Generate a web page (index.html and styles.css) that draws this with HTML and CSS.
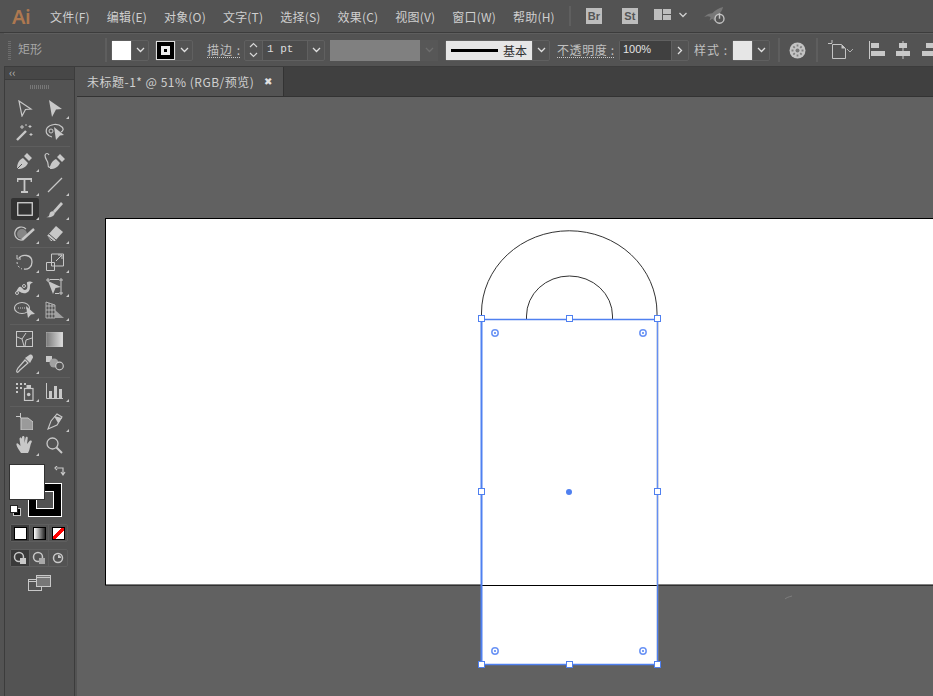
FILE: index.html
```html
<!DOCTYPE html>
<html lang="zh-CN">
<head>
    <meta charset="UTF-8">
    <title>Adobe Illustrator</title>
    <link rel="stylesheet" href="styles.css">
</head>
<body>
<div class="app">
    <!-- menu bar -->
    <header class="menubar">
        <div class="logo">Ai</div>
        <nav class="menu">
            <span>文件(F)</span><span>编辑(E)</span><span>对象(O)</span><span>文字(T)</span><span>选择(S)</span><span>效果(C)</span><span>视图(V)</span><span>窗口(W)</span><span>帮助(H)</span>
        </nav>
        <div class="menu-sep"></div>
        <div class="app-badge badge-br">Br</div>
        <div class="app-badge badge-st">St</div>
        <svg class="layout-icon" width="34" height="11" viewBox="0 0 34 11">
            <path d="M0 0h8v11H0zM9 0h8v5H9zM9 6h8v5H9z" fill="#bdbdbd"/>
            <path d="M25.500 4l3.500 3.500L32.500 4" fill="none" stroke="#d0d0d0" stroke-width="1.300"/>
        </svg>
        <svg class="rocket-icon" width="22" height="18" viewBox="0 0 24 20">
            <path d="M0 11c3-3 6-4 9-4 3-3 7-6 12-7-1 4-3 7-6 9-2 1-3 4-3 7l-3-3-3 2 1-4c-2-1-4-1-7 0z" fill="#777"/>
            <circle cx="17" cy="13" r="5" fill="#535353" stroke="#c4c4c4" stroke-width="1.500"/>
            <path d="M17 7v6" stroke="#c4c4c4" stroke-width="1.600"/>
        </svg>
    </header>

    <!-- control bar -->
    <div class="controlbar">
        <div class="grip"></div>
        <div class="shape-name">矩形</div>
        <div class="bar-sep"></div>
        <div class="combo combo-fill">
            <div class="swatch swatch-white"></div>
            <div class="drop"><svg class="chev" width="9" height="6" viewBox="0 0 9 6"><path d="M1 1l3.500 3.500L8 1"/></svg></div>
        </div>
        <div class="combo combo-stroke">
            <div class="swatch swatch-black"><span class="stroke-mark"></span></div>
            <div class="drop"><svg class="chev" width="9" height="6" viewBox="0 0 9 6"><path d="M1 1l3.500 3.500L8 1"/></svg></div>
        </div>
        <div class="label label-stroke">描边 :</div>
        <div class="combo combo-weight">
            <div class="stepper">
                <svg width="9" height="18" viewBox="0 0 9 18"><path d="M1 6l3.500-3.500L8 6M1 12l3.500 3.500L8 12" fill="none" stroke="#d8d8d8" stroke-width="1.200"/></svg>
            </div>
            <div class="weight-val">1 pt</div>
            <div class="drop"><svg class="chev" width="9" height="6" viewBox="0 0 9 6"><path d="M1 1l3.500 3.500L8 1"/></svg></div>
        </div>
        <div class="profile">
            <div class="profile-fill"></div>
            <div class="profile-drop"><svg class="chev chev-dim" width="9" height="6" viewBox="0 0 9 6"><path d="M1 1l3.500 3.500L8 1"/></svg></div>
        </div>
        <div class="combo combo-style">
            <div class="brush"><span class="brush-line"></span><span class="brush-name">基本</span></div>
            <div class="drop"><svg class="chev" width="9" height="6" viewBox="0 0 9 6"><path d="M1 1l3.500 3.500L8 1"/></svg></div>
        </div>
        <div class="label label-opacity">不透明度 :</div>
        <div class="combo combo-opacity">
            <div class="opacity-val">100%</div>
            <div class="drop drop-side"><svg width="6" height="9" viewBox="0 0 6 9"><path d="M1 1l3.500 3.500L1 8" fill="none" stroke="#e0e0e0" stroke-width="1.300"/></svg></div>
        </div>
        <div class="label label-style">样式 :</div>
        <div class="combo combo-swatch">
            <div class="swatch swatch-light"></div>
            <div class="drop"><svg class="chev" width="9" height="6" viewBox="0 0 9 6"><path d="M1 1l3.500 3.500L8 1"/></svg></div>
        </div>
        <div class="bar-sep sep-b"></div>
        <svg class="recolor" width="17" height="17" viewBox="0 0 17 17">
            <circle cx="8.500" cy="8.500" r="8" fill="#c4c4c4"/>
            <circle cx="8.500" cy="8.500" r="2" fill="#777"/>
            <path d="M8.500 2.500v2M8.500 12.500v2M2.500 8.500h2M12.500 8.500h2M4.300 4.300l1.500 1.500M11.200 11.200l1.500 1.500M12.700 4.300l-1.500 1.500M5.800 11.200l-1.500 1.500" stroke="#808080" stroke-width="1.800"/>
        </svg>
        <div class="bar-sep sep-c"></div>
        <svg class="artboard-tool" width="25" height="20" viewBox="0 0 25 20">
            <path d="M0 3.500h4M4 0v3" stroke="#c4c4c4" fill="none"/>
            <path d="M4.500 4.500h9l4 4v10h-13z" fill="none" stroke="#c4c4c4"/>
            <path d="M13.500 4.500v4h4z" fill="#c4c4c4"/>
            <path d="M19 9l3 3 3-3" fill="none" stroke="#b0b0b0"/>
        </svg>
        <svg class="align-icon align-one" width="16" height="18" viewBox="0 0 16 18"><path d="M.5 0v18" stroke="#c8c8c8"/><path d="M2 2h8v5H2zM2 10h14v5H2z" fill="#c8c8c8"/></svg>
        <svg class="align-icon align-two" width="14" height="18" viewBox="0 0 14 18"><path d="M7 0v18" stroke="#c8c8c8"/><path d="M3 2h8v5H3zM0 10h14v5H0z" fill="#c8c8c8"/></svg>
        <svg class="align-icon align-three" width="14" height="18" viewBox="0 0 14 18"><path d="M4 2h8v5H4zM0 10h14v5H0z" fill="#c8c8c8"/></svg>
    </div>

    <div class="workspace">
        <!-- tools panel -->
        <aside class="tools">
            <div class="tools-head"><span class="collapse">‹‹</span></div>
            <div class="tools-grip"></div>

            <div class="tool-group group-select">
                <div class="tool"><svg width="16" height="17" viewBox="0 0 16 17"><path d="M2 1l12 8-5.500.5L5 16z" fill="none" stroke="#c8c8c8" stroke-width="1.200"/></svg></div>
                <div class="tool corner"><svg width="16" height="17" viewBox="0 0 16 17"><path d="M2 0l13 9-6 .5L5 17z" fill="#c8c8c8"/></svg></div>
                <div class="tool"><svg width="18" height="18" viewBox="0 0 18 18"><path d="M1 17L10 8" stroke="#c8c8c8" stroke-width="2.400"/><path d="M6 2v4M4 4h4M14 2v3M12.500 3.500h3M15 10v3M13.500 11.500h3M10 1v2" stroke="#c8c8c8"/></svg></div>
                <div class="tool"><svg width="20" height="18" viewBox="0 0 20 18"><path d="M7 14C2 13 0 9 2 5c3-4 11-5 15-1 2 2 1 4-1 5" fill="none" stroke="#c8c8c8" stroke-width="1.200"/><path d="M9 4l10 8-4 .5L11 17z" fill="#c8c8c8"/><circle cx="6" cy="8" r="2" fill="none" stroke="#c8c8c8"/></svg></div>
            </div>
            <div class="tool-group group-draw">
                <div class="tool corner"><svg width="17" height="18" viewBox="0 0 17 18"><path d="M1 17c0-6 2-9 6-11l5 5c-2 4-5 6-11 6zM8 4l3-3 5 5-3 3z" fill="#c8c8c8"/><path d="M1 17l5-5" stroke="#535353"/></svg></div>
                <div class="tool"><svg width="22" height="18" viewBox="0 0 22 18"><path d="M6 17c0-5 2-8 6-10l4 4c-2 4-5 6-10 6zM13 5l3-3 5 5-3 3z" fill="#c8c8c8"/><path d="M1 3c0 5 3 5 3 9s2 4 3 2" fill="none" stroke="#c8c8c8" stroke-width="1.200"/><path d="M1 3c1-2 3-2 4 0" fill="none" stroke="#c8c8c8" stroke-width="1.200"/></svg></div>
                <div class="tool corner tool-type"><svg width="15" height="15" viewBox="0 0 15 15"><path d="M.5 4V1h14v3M7.500 1v13M4 14h7" fill="none" stroke="#c8c8c8" stroke-width="1.800"/></svg></div>
                <div class="tool corner"><svg width="16" height="16" viewBox="0 0 16 16"><path d="M1 15L15 1" stroke="#c8c8c8" stroke-width="1.200"/></svg></div>
                <div class="tool corner tool-active"><svg width="16" height="14" viewBox="0 0 16 14"><rect x=".75" y=".75" width="14.500" height="12.500" fill="none" stroke="#d4d4d4" stroke-width="1.300"/></svg></div>
                <div class="tool corner"><svg width="17" height="17" viewBox="0 0 17 17"><path d="M7 10L15 1l2 2-8 9z" fill="#c8c8c8"/><path d="M0 16c3 0 3-1 3.500-3s2-3 4-2.500 1.500 3-.5 4.500-4.500 1.500-7 1z" fill="#c8c8c8"/></svg></div>
                <div class="tool corner"><svg width="22" height="17" viewBox="0 0 22 17"><path d="M8 15A6.500 6.500 0 1 1 12 4" fill="none" stroke="#c8c8c8" stroke-width="1.200"/><circle cx="8" cy="9" r="5" fill="#a8a8a8" opacity=".6"/><path d="M8 15L20 4" stroke="#c8c8c8" stroke-width="2.400"/></svg></div>
                <div class="tool corner"><svg width="18" height="17" viewBox="0 0 18 17"><path d="M1 11L10 1l7 6-8 9H5z" fill="#c8c8c8"/><path d="M1 11l7 5.500M3 9l7 6" fill="none" stroke="#535353"/></svg></div>
            </div>
            <div class="tool-group group-shape">
                <div class="tool corner"><svg width="18" height="17" viewBox="0 0 18 17"><path d="M3 4C6 0 16 0 16 8c0 5-4 8-8 7" fill="none" stroke="#c8c8c8" stroke-width="1.300"/><path d="M1 8c0 3 2 6 5 7" fill="none" stroke="#c8c8c8" stroke-dasharray="2 2"/><path d="M1 1v4h4" fill="none" stroke="#c8c8c8"/></svg></div>
                <div class="tool corner"><svg width="18" height="18" viewBox="0 0 18 18"><path d="M.5 9.500h8v8h-8zM5.500 1h12v12h-12z" fill="none" stroke="#c8c8c8"/><path d="M10 8l6-6M12 2h4v4" fill="none" stroke="#c8c8c8"/></svg></div>
                <div class="tool corner"><svg width="20" height="17" viewBox="0 0 20 17"><path d="M1 14c2-4 3-6 5-5s2 3 4 3 3-3 2-6 4-3 6-1c-3 0-3 2-3 4 0 5-4 7-7 6-3 0-4-3-7-1z" fill="#c8c8c8"/><circle cx="2" cy="15" r="1.500" fill="#535353" stroke="#c8c8c8"/><circle cx="9" cy="8" r="1.500" fill="#535353" stroke="#c8c8c8"/></svg></div>
                <div class="tool corner"><svg width="19" height="17" viewBox="0 0 19 17"><path d="M3 3l13 6-5.500 1-2.500 6z" fill="#c8c8c8"/><path d="M2 1h2v2H2zM15 1h2v2h-2zM15 14h2v2h-2zM5 1.500h9M16 4v9M10 15.500h4" fill="none" stroke="#c8c8c8"/></svg></div>
                <div class="tool corner"><svg width="22" height="18" viewBox="0 0 22 18"><ellipse cx="8" cy="7" rx="7.500" ry="5.500" fill="none" stroke="#c8c8c8" stroke-width="1.100"/><path d="M4 7h9" stroke="#c8c8c8" stroke-dasharray="1 1"/><path d="M12 5l9 8-4 .5L14 17z" fill="#c8c8c8"/></svg></div>
                <div class="tool corner"><svg width="19" height="18" viewBox="0 0 19 18"><path d="M1 1l9 3 0 13H1zM1 5h9M1 9h9M1 13h9M4 2v15M7 3v14" fill="none" stroke="#c8c8c8" stroke-width=".8"/><path d="M10 9l9 8h-9z" fill="#a0a0a0"/></svg></div>
            </div>
            <div class="tool-group group-paint">
                <div class="tool"><svg width="17" height="16" viewBox="0 0 17 16"><rect x=".5" y=".5" width="16" height="15" fill="none" stroke="#c8c8c8"/><path d="M1 6l5 2 4-6M6 8l2 7M10 9l6-2M10 9l-1 6" fill="none" stroke="#c8c8c8"/></svg></div>
                <div class="tool"><svg width="17" height="15" viewBox="0 0 17 15"><defs><linearGradient id="gradBox"><stop offset="0" stop-color="#777"/><stop offset="1" stop-color="#e0e0e0"/></linearGradient></defs><rect width="17" height="15" fill="url(#gradBox)" stroke="#c8c8c8" stroke-width=".6"/></svg></div>
                <div class="tool corner"><svg width="18" height="19" viewBox="0 0 18 19"><path d="M1 18c-1-1 0-2 1-4l7-8 3 3-8 7c-1 1-2 3-3 2z" fill="none" stroke="#c8c8c8" stroke-width="1.200"/><path d="M9 4l5-3.500c2-.5 3 1 3 3L14 9z" fill="#c8c8c8"/></svg></div>
                <div class="tool"><svg width="19" height="16" viewBox="0 0 19 16"><path d="M1 1h6v6H1z" fill="#c8c8c8"/><circle cx="9" cy="8" r="4.500" fill="#a0a0a0"/><circle cx="14.500" cy="11" r="3.800" fill="#535353" stroke="#c8c8c8" stroke-width="1.200"/></svg></div>
            </div>
            <div class="tool-group group-symbol">
                <div class="tool corner"><svg width="19" height="19" viewBox="0 0 19 19"><path d="M1 1h2v2H1zM5 1h2v2H5zM9 1h2v2H9zM1 5h2v2H1zM5 5h2v2H5zM1 9h2v2H1z" fill="#c8c8c8"/><rect x="9.500" y="6.500" width="8.500" height="12" fill="none" stroke="#c8c8c8" stroke-width="1.200"/><rect x="11.500" y="3" width="4.500" height="3" fill="#c8c8c8"/><circle cx="13.700" cy="12.500" r="1.800" fill="#c8c8c8"/></svg></div>
                <div class="tool corner"><svg width="17" height="16" viewBox="0 0 17 16"><path d="M.5 0v15.500H17" fill="none" stroke="#c8c8c8"/><path d="M3 8h3v7H3zM8 3h3v12H8zM13 6h3v9h-3z" fill="#c8c8c8"/></svg></div>
            </div>
            <div class="tool-group group-view">
                <div class="tool"><svg width="17" height="17" viewBox="0 0 17 17"><path d="M0 3.500h5M4.500 0v5" stroke="#c8c8c8" fill="none"/><path d="M5 5h7l5 4v8H5z" fill="#9a9a9a" stroke="#c8c8c8"/></svg></div>
                <div class="tool corner"><svg width="16" height="17" viewBox="0 0 16 17"><path d="M1 16l3-8 6-7 5 3-5 8z" fill="none" stroke="#c8c8c8" stroke-width="1.100"/><path d="M7 3l8 2-4 5z" fill="#c8c8c8"/></svg></div>
                <div class="tool corner"><svg width="17" height="18" viewBox="0 0 17 18"><path d="M5 17C3 14 1 11 .5 9c-.5-2 1-2 2-1l2 2-1-7c0-2 2-2 2.500 0L6 7V1.500c0-2 2.500-2 2.500 0V7l1-5c.5-2 2.500-1.500 2.200.5L11 8l2.500-3c1.500-1 3 0 2 1.500C14 9 14 14 12 17z" fill="#c8c8c8"/></svg></div>
                <div class="tool"><svg width="17" height="17" viewBox="0 0 17 17"><circle cx="6.500" cy="6.500" r="5.500" fill="none" stroke="#c8c8c8" stroke-width="1.300"/><path d="M10.500 10.500L16 16" stroke="#c8c8c8" stroke-width="2"/></svg></div>
            </div>

            <div class="colors">
                <div class="color-stroke"><span></span></div>
                <div class="color-fill"></div>
                <svg class="color-swap" width="12" height="12" viewBox="0 0 12 12"><path d="M3 2h6v6M3 0L1 2l2 2M7 6l2 3 2-3" fill="none" stroke="#c8c8c8" stroke-width="1.200"/></svg>
                <svg class="color-default" width="11" height="11" viewBox="0 0 11 11"><rect x="3.500" y="3.500" width="7" height="7" fill="#000" stroke="#c8c8c8"/><rect x=".5" y=".5" width="7" height="7" fill="#fff" stroke="#222"/></svg>
            </div>
            <div class="mode-row">
                <div class="mode-cell cell-active"><span class="mode mode-white"></span></div>
                <div class="mode-cell"><span class="mode mode-grad"></span></div>
                <div class="mode-cell"><span class="mode mode-none"></span></div>
            </div>
            <div class="mode-row draw-row">
                <div class="mode-cell cell-active"><svg width="14" height="14" viewBox="0 0 14 14"><circle cx="6" cy="6" r="4.500" fill="none" stroke="#c8c8c8" stroke-width="1.500"/><rect x="7" y="7" width="6" height="6" fill="#c8c8c8"/></svg></div>
                <div class="mode-cell"><svg width="14" height="14" viewBox="0 0 14 14"><circle cx="6" cy="6" r="4.500" fill="none" stroke="#c8c8c8" stroke-width="1.500"/><rect x="7" y="7" width="6" height="6" fill="#a8a8a8"/></svg></div>
                <div class="mode-cell"><svg width="12" height="12" viewBox="0 0 12 12"><circle cx="6" cy="6" r="4.500" fill="none" stroke="#c8c8c8" stroke-width="1.500"/><path d="M6 6V3a3 3 0 0 1 3 3z" fill="#c8c8c8"/></svg></div>
            </div>
            <svg class="screen-mode" width="23" height="16" viewBox="0 0 23 16">
                <rect x=".5" y="4.500" width="13" height="11" fill="#535353" stroke="#c8c8c8"/>
                <rect x="8.500" y=".5" width="14" height="11" fill="#777" stroke="#c8c8c8"/>
                <path d="M.5 6.500h8M8.500 2.500h14" stroke="#c8c8c8"/>
            </svg>
        </aside>

        <!-- document -->
        <main class="document">
            <div class="tabbar">
                <div class="tab"><span>未标题-1* @ 51% (RGB/预览)</span><span class="tab-close">✖</span></div>
            </div>
            <div class="canvas">
                <svg class="stage" width="856" height="599" viewBox="77 97 856 599">
                    <rect x="105.500" y="218.500" width="900" height="366.500" fill="#fff" stroke="#000"/>
                    <rect x="481" y="319" width="176" height="345" fill="#fff"/>
                    <path d="M481.500 319V313a87.500 82 0 0 1 175.500 0V319" fill="none" stroke="#333"/>
                    <path d="M526.500 319V316a43 40 0 0 1 86 0V319" fill="none" stroke="#333"/>
                    <path d="M481.500 585.500H657.500" stroke="#000"/>
                    <path d="M657.500 319V664" stroke="#a8a8a8" stroke-width="1.500"/>
                    <path d="M481 319.500H657.500V664.500H481" fill="none" stroke="#4f80f0" stroke-width="1.300"/>
                    <path d="M481.500 319V665" stroke="#4f80f0" stroke-width="2"/>
                    <path d="M657.500 319V585" stroke="#6a93f5" stroke-width=".8"/>
                    <path d="M785 599c1-1 3-2 7-3" stroke="#8a8a8a" fill="none" stroke-width=".7"/>
                    <g fill="#fff" stroke="#4f80f0">
                        <rect x="478.500" y="315.500" width="6" height="6"/>
                        <rect x="566.500" y="315.500" width="6" height="6"/>
                        <rect x="654.500" y="315.500" width="6" height="6"/>
                        <rect x="478.500" y="488.500" width="6" height="6"/>
                        <rect x="654.500" y="488.500" width="6" height="6"/>
                        <rect x="478.500" y="661.500" width="6" height="6"/>
                        <rect x="566.500" y="661.500" width="6" height="6"/>
                        <rect x="654.500" y="661.500" width="6" height="6"/>
                    </g>
                    <g fill="none" stroke="#6a93f5" stroke-width="1.500">
                        <circle cx="495" cy="333" r="3.200"/>
                        <circle cx="643" cy="333" r="3.200"/>
                        <circle cx="495" cy="651" r="3.200"/>
                        <circle cx="643" cy="651" r="3.200"/>
                    </g>
                    <g fill="#4f80f0">
                        <circle cx="495" cy="333" r="1"/>
                        <circle cx="643" cy="333" r="1"/>
                        <circle cx="495" cy="651" r="1"/>
                        <circle cx="643" cy="651" r="1"/>
                        <circle cx="569" cy="492" r="3"/>
                    </g>
                </svg>
            </div>
        </main>
    </div>
</div>
</body>
</html>
```

FILE: styles.css
```css
* {
    box-sizing: border-box;
}
html, body {
    margin: 0;
    height: 100%;
    overflow: hidden;
}
body {
    font-family: "Noto Sans CJK SC", "Liberation Sans", sans-serif;
    font-size: 12px;
    color: #c8c8c8;
    background: #535353;
}
.app {
    width: 933px;
    height: 696px;
    display: flex;
    flex-direction: column;
}

/* menu bar */
.menubar {
    height: 33px;
    display: flex;
    align-items: center;
    background: #535353;
    border-bottom: 1px solid #3c3c3c;
}
.logo {
    width: 50px;
    padding-left: 12px;
    font-family: "Noto Sans", sans-serif;
    font-size: 20px;
    font-weight: 600;
    letter-spacing: -.5px;
    color: #ad7850;
}
.menu {
    display: flex;
    gap: 17px;
    line-height: 17px;
    letter-spacing: .2px;
    color: #cfcfcf;
}
.menu-sep {
    width: 2px;
    height: 20px;
    margin-left: 14px;
    background: #5f5f5f;
}
.app-badge {
    width: 16px;
    height: 16px;
    background: #bdbdbd;
    color: #555;
    font-family: "Liberation Sans", sans-serif;
    font-size: 11px;
    font-weight: bold;
    line-height: 16px;
    text-align: center;
}
.badge-br {
    margin-left: 15px;
}
.badge-st {
    margin-left: 20px;
}
.layout-icon {
    margin-left: 16px;
    margin-top: -3px;
}
.rocket-icon {
    margin-left: 16px;
    margin-top: -1px;
}

/* control bar */
.controlbar {
    height: 34px;
    display: flex;
    align-items: center;
    margin-left: 4px;
    padding-left: 4px;
    background: #535353;
    border-top: 1px solid #5e5e5e;
    border-bottom: 1px solid #3c3c3c;
    overflow: hidden;
}
.grip {
    width: 3px;
    height: 19px;
    flex: none;
    background: repeating-linear-gradient(#6e6e6e 0 1px, #535353 1px 2px);
}
.shape-name {
    margin-left: 7px;
    width: 87px;
    flex: none;
    color: #a6a6a6;
    margin-top: -3px;
}
.bar-sep {
    width: 2px;
    height: 24px;
    flex: none;
    background: #5e5e5e;
}
.combo {
    height: 21px;
    display: flex;
    border: 1px solid #606060;
    border-radius: 2px;
    flex: none;
}
.drop {
    width: 17px;
    flex: none;
    display: flex;
    align-items: center;
    justify-content: center;
    border-left: 1px solid #606060;
}
.chev {
    fill: none;
    stroke: #e0e0e0;
    stroke-width: 1.300;
}
.chev-dim {
    stroke: #6e6e6e;
}
.swatch {
    width: 19px;
    flex: none;
}
.swatch-white {
    background: #fff;
}
.swatch-light {
    background: #e6e6e6;
}
.swatch-black {
    background: #000;
    border: 1px solid #ddd;
    display: flex;
    align-items: center;
    justify-content: center;
}
.stroke-mark {
    width: 9px;
    height: 9px;
    border: 3px solid #eee;
}
.combo-fill {
    margin-left: 4px;
}
.combo-stroke {
    margin-left: 6px;
}
.label {
    flex: none;
    color: #c0c0c0;
    line-height: 14px;
    border-bottom: 1px dotted #c8c8c8;
}
.label-stroke {
    margin-left: 14px;
    width: 33px;
    letter-spacing: 1px;
    white-space: nowrap;
}
.combo-weight {
    margin-left: 4px;
    width: 81px;
}
.stepper {
    width: 18px;
    display: flex;
    align-items: center;
    justify-content: center;
    border-right: 1px solid #606060;
}
.weight-val {
    flex: 1;
    padding-left: 4px;
    font-family: "Liberation Mono", monospace;
    font-size: 11px;
    line-height: 16px;
    background: #4c4c4c;
    color: #ddd;
}
.profile {
    margin-left: 5px;
    width: 108px;
    height: 21px;
    display: flex;
    flex: none;
}
.profile-fill {
    width: 90px;
    background: #808080;
}
.profile-drop {
    flex: 1;
    display: flex;
    align-items: center;
    justify-content: center;
    background: #575757;
}
.combo-style {
    margin-left: 7px;
    width: 105px;
}
.brush {
    flex: 1;
    display: flex;
    align-items: center;
    background: #e6e6e6;
    padding-left: 5px;
    color: #333;
}
.brush-line {
    width: 47px;
    height: 3px;
    background: #000;
}
.brush-name {
    margin-left: 5px;
}
.label-opacity {
    margin-left: 7px;
    width: 57px;
    white-space: nowrap;
    letter-spacing: .6px;
}
.combo-opacity {
    margin-left: 5px;
    width: 70px;
}
.opacity-val {
    flex: 1;
    padding-left: 3px;
    font-family: "Liberation Sans", sans-serif;
    font-size: 11px;
    line-height: 16px;
    background: #404040;
    color: #e4e4e4;
}
.label-style {
    margin-left: 5px;
    width: 33px;
    border-bottom: 0;
    letter-spacing: 1px;
    white-space: nowrap;
}
.combo-swatch {
    margin-left: 5px;
}
.sep-b {
    margin-left: 8px;
}
.recolor {
    margin-left: 9px;
    flex: none;
}
.sep-c {
    margin-left: 10px;
}
.artboard-tool {
    margin-left: 10px;
    flex: none;
}
.align-icon {
    flex: none;
}
.align-one {
    margin-left: 16px;
}
.align-two {
    margin-left: 11px;
}
.align-three {
    margin-left: 12px;
}

/* tools panel */
.workspace {
    flex: 1;
    display: flex;
    min-height: 0;
}
.tools {
    width: 71px;
    flex: none;
    margin-left: 4px;
    margin-right: 2px;
    background: #535353;
    border-left: 1px solid #3c3c3c;
    border-right: 1px solid #3c3c3c;
    display: flex;
    flex-direction: column;
    align-items: center;
}
.tools-head {
    width: 100%;
    height: 13px;
    background: #474747;
    border-bottom: 1px solid #3c3c3c;
    padding-left: 4px;
    line-height: 11px;
    font-size: 11px;
    color: #bbb;
}
.tools-grip {
    width: 20px;
    height: 4px;
    margin-top: 5px;
    background: repeating-linear-gradient(90deg, #777 0 1px, #535353 1px 2px);
}
.tool-group {
    width: 60px;
    display: grid;
    grid-template-columns: 30px 30px;
    grid-auto-rows: 24px;
    padding-bottom: 2px;
    border-bottom: 1px solid #5e5e5e;
    justify-items: center;
    align-items: center;
}
.group-select {
    margin-top: 3px;
    padding-top: 4px;
}
.group-draw {
    padding-top: 2px;
}
.group-shape {
    padding-top: 2px;
}
.group-paint {
    padding-top: 2px;
}
.group-symbol {
    padding-top: 1px;
    padding-bottom: 3px;
}
.group-view {
    padding-top: 2px;
    border-bottom: 0;
}
.tool {
    position: relative;
    width: 28px;
    height: 22px;
    display: flex;
    align-items: center;
    justify-content: center;
    border-radius: 2px;
}
.tool-active {
    background: #333;
}
.corner::after {
    content: "";
    position: absolute;
    right: 0;
    bottom: 0;
    border-left: 3px solid transparent;
    border-bottom: 3px solid #c8c8c8;
}
.colors {
    position: relative;
    width: 53px;
    height: 57px;
    margin-top: 5px;
    align-self: flex-start;
    margin-left: 4px;
    flex: none;
}
.color-fill {
    position: absolute;
    left: 0;
    top: 0;
    width: 36px;
    height: 36px;
    background: #fff;
    border: 1px solid #333;
}
.color-stroke {
    position: absolute;
    left: 19px;
    top: 19px;
    width: 34px;
    height: 34px;
    background: #000;
    border: 1px solid #fff;
}
.color-stroke span {
    position: absolute;
    left: 7px;
    top: 7px;
    width: 18px;
    height: 18px;
    border: 1px solid #fff;
    background: #535353;
}
.color-swap {
    position: absolute;
    left: 45px;
    top: 2px;
}
.color-default {
    position: absolute;
    left: 1px;
    top: 41px;
}
.mode-row {
    width: 58px;
    height: 18px;
    display: flex;
    flex: none;
    align-self: flex-start;
    margin-top: 3px;
    margin-left: 5px;
    border: 1px solid #5e5e5e;
    border-radius: 2px;
}
.draw-row {
    margin-top: 7px;
}
.mode-cell {
    flex: 1;
    display: flex;
    align-items: center;
    justify-content: center;
    border-left: 1px solid #5e5e5e;
}
.mode-cell:first-child {
    border-left: 0;
}
.cell-active {
    background: #3a3a3a;
}
.mode {
    width: 13px;
    height: 13px;
    border: 1px solid #000;
}
.mode-white {
    background: #fff;
}
.mode-grad {
    background: linear-gradient(90deg, #fff, #222);
}
.mode-none {
    background: linear-gradient(135deg, #fff 38%, #f00 38% 62%, #fff 62%);
}
.screen-mode {
    margin-top: 8px;
    margin-left: -1px;
}

/* document area */
.document {
    flex: 1;
    min-width: 0;
    display: flex;
    flex-direction: column;
}
.tabbar {
    height: 30px;
    flex: none;
    display: flex;
    background: #404040;
    border-bottom: 1px solid #333;
}
.tab {
    width: 207px;
    display: flex;
    align-items: center;
    justify-content: space-between;
    padding: 0 10px;
    background: #535353;
    border-right: 1px solid #333;
    color: #d0d0d0;
    white-space: nowrap;
    letter-spacing: .5px;
}
.tab-close {
    font-size: 10px;
    color: #e0e0e0;
    font-family: "DejaVu Sans", sans-serif;
}
.canvas {
    flex: 1;
    position: relative;
    background: #616161;
    overflow: hidden;
}
.stage {
    position: absolute;
    left: 0;
    top: 0;
}
```
